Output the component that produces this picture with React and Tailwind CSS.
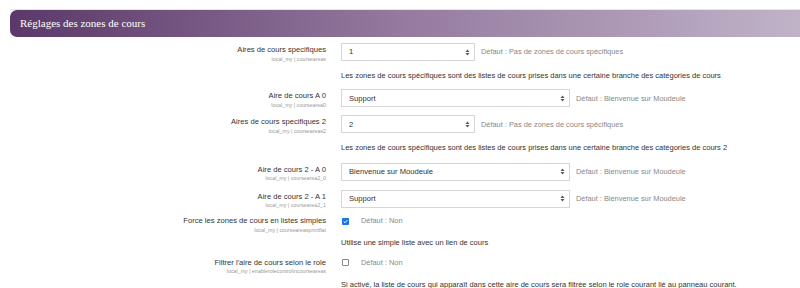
import React from "react";

const rows = [
    { label: "Aires de cours specifiques", key: "courseareas", value: "1", wide: false, def: "Défaut : Pas de zones de cours spécifiques", desc: "Les zones de cours spécifiques sont des listes de cours prises dans une certaine branche des catégories de cours", top: "mt-[6px]" },
    { label: "Aire de cours A 0", key: "coursearea0", value: "Support", wide: true, def: "Défaut : Bienvenue sur Moudeule", top: "mt-[10px]" },
    { label: "Aires de cours specifiques 2", key: "courseareas2", value: "2", wide: false, def: "Défaut : Pas de zones de cours spécifiques", desc: "Les zones de cours spécifiques sont des listes de cours prises dans une certaine branche des catégories de cours 2", top: "mt-[7px]" },
    { label: "Aire de cours 2 - A 0", key: "coursearea2_0", value: "Bienvenue sur Moudeule", wide: true, def: "Défaut : Bienvenue sur Moudeule", top: "mt-[11px]" },
    { label: "Aire de cours 2 - A 1", key: "coursearea2_1", value: "Support", wide: true, def: "Défaut : Bienvenue sur Moudeule", top: "mt-[8px]" },
];

function Arrows() {
    return (
        <svg width="5" height="7" viewBox="0 0 5 7" className="shrink-0">
            <path d="M2.5 0.5 L4.5 3 L0.5 3 Z" fill="#555" />
            <path d="M2.5 6.5 L4.5 4 L0.5 4 Z" fill="#555" />
        </svg>
    );
}

function Label({ label, k }) {
    return (
        <div className="w-[327px] shrink-0 pr-[1px] text-right leading-none">
            <div className="text-[7.6px] text-[#333] pt-[3px]">{label}</div>
            <div className="text-[5.3px] text-[#999] mt-[3px]">local_my | {k}</div>
        </div>
    );
}

function SelectRow({ r }) {
    return (
        <div className={r.top}>
            <div className="flex items-start">
                <Label label={r.label} k={r.key} />
                <div className="ml-[14px] flex items-center">
                    <div className={`h-[18px] ${r.wide ? "w-[229px]" : "w-[134px]"} border border-[#d6d6d6] bg-white flex items-center justify-between pl-[7px] pr-[4px] text-[7.6px] text-[#333]`}>
                        <span>{r.value}</span>
                        <Arrows />
                    </div>
                    <span className="ml-[6px] text-[7.4px] text-[#888]">{r.def}</span>
                </div>
            </div>
            {r.desc && (
                <div className="ml-[341px] mt-[10px] text-[7.5px] text-[#333] leading-none">{r.desc}</div>
            )}
        </div>
    );
}

function CheckRow({ label, k, checked, desc, top }) {
    return (
        <div className={top}>
            <div className="flex items-start">
                <Label label={label} k={k} />
                <div className="ml-[15px] flex items-center pt-[3px]">
                    {checked ? (
                        <span className="w-[7px] h-[7px] rounded-[1px] bg-[#1a73e8] flex items-center justify-center">
                            <svg width="5" height="5" viewBox="0 0 10 10"><path d="M1.5 5.2 L4 7.5 L8.5 2.5" stroke="#fff" strokeWidth="2" fill="none" /></svg>
                        </span>
                    ) : (
                        <span className="w-[7px] h-[7px] rounded-[1px] border border-[#888] bg-white" />
                    )}
                    <span className="ml-[12px] text-[7.4px] text-[#888] leading-none">Défaut : Non</span>
                </div>
            </div>
            <div className="ml-[341px] mt-[6px] text-[7.5px] text-[#333] leading-none">{desc}</div>
        </div>
    );
}

export default function App() {
    return (
        <div className="w-[800px] h-[288px] overflow-hidden bg-white font-['Liberation_Sans',Arial,sans-serif]">
            <div className="pt-[9px] pl-[10px]">
                <div className="border-t border-[#e6e6e6]">
                    <div className="h-[27px] rounded-l-[7px] bg-gradient-to-r from-[#5b3868] via-[#957b9f] to-[#c0b3c8] flex items-center pl-[10px]">
                        <span className="font-['Liberation_Serif',serif] text-[11px] text-white">Réglages des zones de cours</span>
                    </div>
                </div>
            </div>

            {rows.map((r) => (
                <SelectRow key={r.key} r={r} />
            ))}

            <CheckRow
                label="Force les zones de cours en listes simples"
                k="courseareasprintflat"
                checked
                desc="Utilise une simple liste avec un lien de cours"
                top="mt-[6px]"
            />
            <CheckRow
                label="Filtrer l'aire de cours selon le role"
                k="enablerolecontrolincourseareas"
                checked={false}
                desc="Si activé, la liste de cours qui apparaît dans cette aire de cours sera filtrée selon le role courant lié au panneau courant."
                top="mt-[9px]"
            />
        </div>
    );
}
